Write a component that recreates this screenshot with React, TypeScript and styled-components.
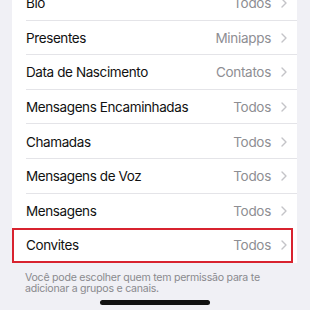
import styled, { createGlobalStyle } from "styled-components";

const GlobalStyle = createGlobalStyle`
  html, body {
    margin: 0;
    padding: 0;
    background: #f0f0f5;
    overflow: hidden;
  }
  body {
    font-family: Inter, "Liberation Sans", sans-serif;
  }
`;

const Screen = styled.div`
  width: 310px;
  height: 310px;
  overflow: hidden;
  background: #f0f0f5;
  display: flex;
  flex-direction: column;
`;

const Card = styled.div`
  margin: -14px 13px 0 12px;
  background: #fff;
  display: flex;
  flex-direction: column;
`;

const Row = styled.div<{ $highlight?: boolean; $last?: boolean }>`
  position: relative;
  height: 34.6px;
  display: flex;
  align-items: center;
  padding: 0 10px 0 14px;
  box-sizing: border-box;
  &::after {
    content: "";
    display: ${(p) => (p.$last ? "none" : "block")};
    position: absolute;
    left: 14px;
    right: 0;
    bottom: 0;
    height: 1px;
    background: #e4e4e8;
  }
  ${(p) =>
    p.$highlight &&
    `
    margin-right: 4px;
    padding-right: 6px;
    outline: 2.4px solid #d8232f;
    outline-offset: -2.4px;
  `}
`;

const Label = styled.span`
  flex: 1;
  font-size: 13.5px;
  color: #111;
  letter-spacing: -0.4px;
`;

const Value = styled.span`
  font-size: 13.5px;
  color: #8e8e93;
  letter-spacing: -0.3px;
  margin-right: 10px;
`;

const Chevron = () => (
  <svg width="6" height="10" viewBox="0 0 6 10">
    <path
      d="M1 1l4 4-4 4"
      fill="none"
      stroke="#c4c4c8"
      strokeWidth="1.4"
      strokeLinecap="round"
      strokeLinejoin="round"
    />
  </svg>
);

const Footer = styled.div`
  padding: 9px 20px 0 25px;
  font-size: 10.6px;
  line-height: 11px;
  letter-spacing: -0.25px;
  color: #8a8a8e;
`;

const HomeBar = styled.div`
  margin: 6px auto 0;
  width: 110px;
  height: 5px;
  border-radius: 3px;
  background: #111;
`;

const rows = [
  { label: "Bio", value: "Todos" },
  { label: "Presentes", value: "Miniapps" },
  { label: "Data de Nascimento", value: "Contatos" },
  { label: "Mensagens Encaminhadas", value: "Todos" },
  { label: "Chamadas", value: "Todos" },
  { label: "Mensagens de Voz", value: "Todos" },
  { label: "Mensagens", value: "Todos" },
  { label: "Convites", value: "Todos" },
];

const App = () => {
  return (
    <Screen>
      <GlobalStyle />
      <Card>
        {rows.map((r, i) => (
          <Row
            key={r.label}
            $highlight={r.label === "Convites"}
            $last={i >= rows.length - 2}
          >
            <Label>{r.label}</Label>
            <Value>{r.value}</Value>
            <Chevron />
          </Row>
        ))}
      </Card>
      <Footer>
        Você pode escolher quem tem permissão para te adicionar a grupos e
        canais.
      </Footer>
      <HomeBar />
    </Screen>
  );
};

export default App;
